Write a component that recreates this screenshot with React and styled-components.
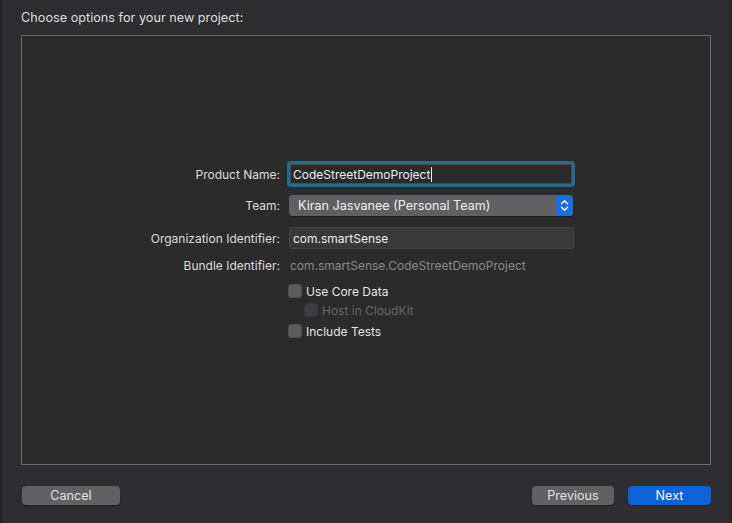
import React from 'react';
import styled, { createGlobalStyle } from 'styled-components';

const Global = createGlobalStyle`
  html, body {
    margin: 0;
    padding: 0;
    background: #2d2d2f;
  }
  body {
    font-family: Inter, "Noto Sans", "Liberation Sans", sans-serif;
    font-size: 12px;
    -webkit-font-smoothing: antialiased;
  }
`;

const Sheet = styled.div`
  width: 732px;
  height: 523px;
  box-sizing: border-box;
  padding: 0 21px;
  background: #2e2e30;
  box-shadow: inset 2px 0 0 #242425, inset -2px 0 0 #242425;
  display: flex;
  flex-direction: column;
`;

const Title = styled.div`
  height: 35px;
  display: flex;
  align-items: center;
  padding-bottom: 1px;
  box-sizing: border-box;
  color: #dedede;
  font-size: 12.7px;
`;

const Panel = styled.div`
  height: 430px;
  box-sizing: border-box;
  border: 1px solid #6b6b6b;
  background: #2b2b2c;
  display: flex;
  flex-direction: column;
  justify-content: center;
`;

const Form = styled.div`
  display: flex;
  flex-direction: column;
`;

const Row = styled.div`
  display: grid;
  grid-template-columns: 258px 294px;
  column-gap: ${p => p.$gap ?? 9}px;
  align-items: center;
  height: ${p => p.$h}px;
  margin-top: ${p => p.$mt || 0}px;
`;

const Label = styled.div`
  text-align: right;
  color: #dcdcdc;
  white-space: nowrap;
`;

const FocusField = styled.div`
  height: 26px;
  box-sizing: border-box;
  border: 3px solid #1f6d96;
  border-radius: 4px;
  background: #2a2a2b;
  box-shadow: inset 0 0 0 1px #4a4a4c;
  display: flex;
  align-items: center;
  padding-left: 3px;
  color: #ececec;
  margin-left: -2px;
  width: 288px;
`;

const Caret = styled.span`
  display: inline-block;
  width: 1px;
  height: 15px;
  background: #f0f0f0;
  margin-left: 1px;
`;

const TextField = styled.div`
  height: 22px;
  width: 285px;
  box-sizing: border-box;
  background: #383839;
  border: 1px solid #434345;
  display: flex;
  align-items: center;
  padding-left: 3px;
  color: #ececec;
`;

const Popup = styled.div`
  height: 21px;
  width: 284px;
  box-sizing: border-box;
  border-radius: 4px;
  background: #606062;
  box-shadow: 0 1px 1px rgba(0, 0, 0, 0.35);
  display: flex;
  align-items: center;
  overflow: hidden;
  color: #efefef;
  font-size: 12.6px;
`;

const PopupText = styled.span`
  flex: 1;
  padding-left: 9px;
`;

const Stepper = styled.div`
  width: 17px;
  height: 100%;
  background: #1a6ee0;
  display: flex;
  align-items: center;
  justify-content: center;
`;

const Value = styled.div`
  color: #8a8a8c;
  padding-left: 1px;
`;

const Check = styled.label`
  display: flex;
  align-items: center;
  gap: 4px;
  margin-left: ${p => (p.$indent ? 15 : -1)}px;
  color: ${p => (p.$disabled ? '#68686a' : '#e4e4e4')};
`;

const Box = styled.span`
  width: 14px;
  height: 14px;
  box-sizing: border-box;
  border-radius: 3px;
  background: ${p => (p.$disabled ? '#3d3d3f' : '#5c5c5e')};
  border: 1px solid ${p => (p.$disabled ? '#363638' : '#4e4e50')};
`;

const Footer = styled.div`
  flex: 1;
  display: flex;
  align-items: flex-start;
  padding-top: 21px;
  padding-left: 1px;
`;

const Button = styled.button`
  height: 19px;
  width: ${p => p.$w}px;
  border: none;
  border-radius: 4px;
  padding: 0 0 1px;
  font: inherit;
  font-size: 12.6px;
  color: ${p => (p.$primary ? '#f4f6fa' : '#e2e2e2')};
  background: ${p => (p.$primary ? '#0c63d6' : '#616163')};
  box-shadow: 0 1px 1px rgba(0, 0, 0, 0.3);
  margin-left: ${p => p.$ml || 0}px;
`;

const Spacer = styled.div`
  flex: 1;
`;

const Chevrons = () => (
  <svg width="9" height="13" viewBox="0 0 9 13" fill="none" stroke="#ffffff" strokeWidth="1.4" strokeLinecap="round" strokeLinejoin="round">
    <path d="M1.5 4.8 L4.5 1.8 L7.5 4.8" />
    <path d="M1.5 8.2 L4.5 11.2 L7.5 8.2" />
  </svg>
);

export default function App() {
  return (
    <>
      <Global />
      <Sheet>
        <Title>Choose options for your new project:</Title>
        <Panel>
          <Form>
            <Row $h={26} $gap={9}>
              <Label>Product Name:</Label>
              <FocusField>
                CodeStreetDemoProject<Caret />
              </FocusField>
            </Row>
            <Row $h={21} $mt={8}>
              <Label>Team:</Label>
              <Popup>
                <PopupText>Kiran Jasvanee (Personal Team)</PopupText>
                <Stepper>
                  <Chevrons />
                </Stepper>
              </Popup>
            </Row>
            <Row $h={22} $mt={11}>
              <Label>Organization Identifier:</Label>
              <TextField>com.smartSense</TextField>
            </Row>
            <Row $h={20} $mt={6}>
              <Label>Bundle Identifier:</Label>
              <Value>com.smartSense.CodeStreetDemoProject</Value>
            </Row>
            <Row $h={16} $mt={8}>
              <span />
              <Check>
                <Box />
                Use Core Data
              </Check>
            </Row>
            <Row $h={16} $mt={3}>
              <span />
              <Check $indent $disabled>
                <Box $disabled />
                Host in CloudKit
              </Check>
            </Row>
            <Row $h={16} $mt={5}>
              <span />
              <Check>
                <Box />
                Include Tests
              </Check>
            </Row>
          </Form>
        </Panel>
        <Footer>
          <Button $w={98}>Cancel</Button>
          <Spacer />
          <Button $w={82}>Previous</Button>
          <Button $w={83} $ml={14} $primary>
            Next
          </Button>
        </Footer>
      </Sheet>
    </>
  );
}
